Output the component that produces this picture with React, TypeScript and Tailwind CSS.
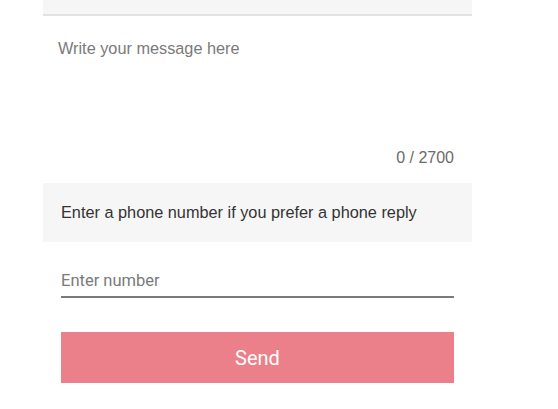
import { useState } from "react"

const ContactForm = () => {
    const [message, setMessage] = useState<string>("")
    const [phone, setPhone] = useState<string>("")

    return (
        <div className="w-[429px] ml-[43px]" style={{ fontFamily: "'Liberation Sans', Arial, sans-serif" }}>
            <div className="h-4 bg-[#f6f6f6] border-b-2 border-[#e2e2e2]"></div>
            <textarea
                value={message}
                onChange={event => setMessage(event.target.value)}
                maxLength={2700}
                placeholder="Write your message here"
                className="block w-full h-[125px] resize-none outline-none px-[15px] pt-[20px] text-[16.3px] text-[#333] placeholder:text-[#7a7a7a] bg-white"
            />
            <div className="flex justify-end pr-[18px] text-base text-[#6b6b6b] leading-5 pt-[7px]">
                {message.length} / 2700
            </div>
            <div className="mt-[15px] h-[59px] bg-[#f6f6f6] flex items-center pl-[18px] pb-[1px] text-[16.3px] text-[#333]">
                Enter a phone number if you prefer a phone reply
            </div>
            <div className="px-[18px]" style={{ fontFamily: "Roboto, 'Liberation Sans', sans-serif" }}>
                <input
                    type="text"
                    value={phone}
                    onChange={event => setPhone(event.target.value)}
                    placeholder="Enter number"
                    className="block w-full mt-[29px] pb-[5px] text-[16.5px] text-[#333] placeholder:text-[#7a7a7a] outline-none border-b-2 border-[#7a7a7a] leading-5"
                />
                <button className="mt-[34px] w-full h-[51px] bg-[#ec808a] text-white text-xl">
                    Send
                </button>
            </div>
        </div>
    )
}

export default function App() {
    return (
        <div className="w-[558px] h-[409px] bg-white overflow-hidden">
            <ContactForm />
        </div>
    )
}
